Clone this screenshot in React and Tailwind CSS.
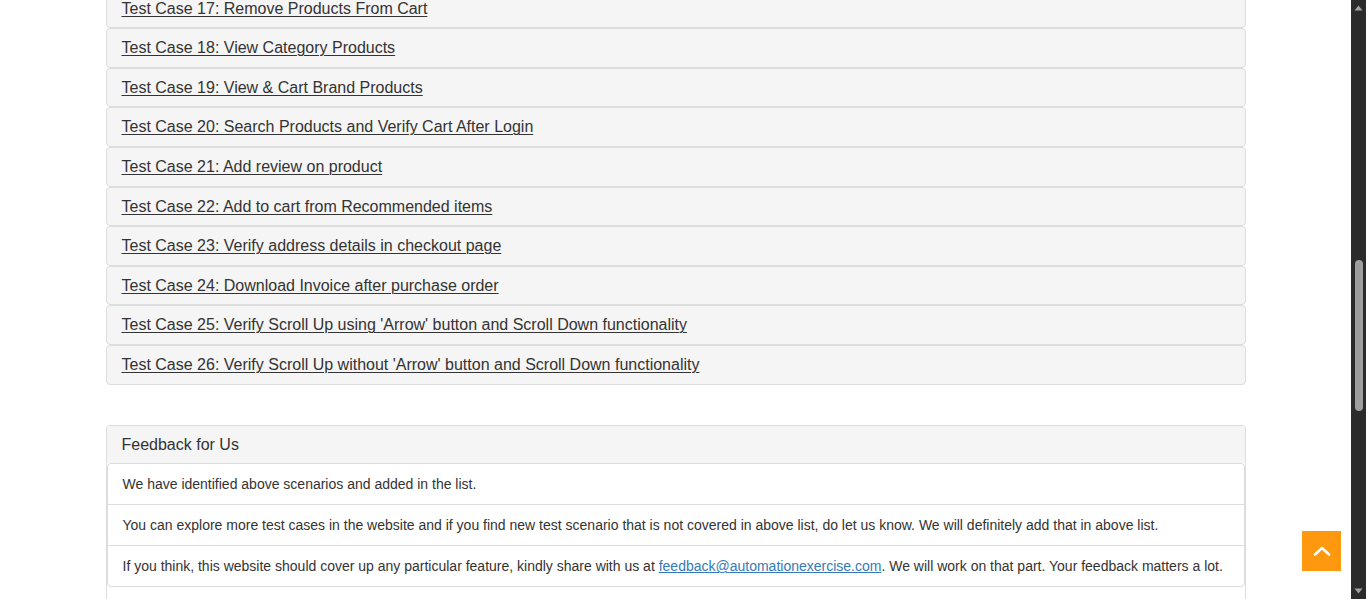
import React from "react";

const cases = [
  "Test Case 17: Remove Products From Cart",
  "Test Case 18: View Category Products",
  "Test Case 19: View & Cart Brand Products",
  "Test Case 20: Search Products and Verify Cart After Login",
  "Test Case 21: Add review on product",
  "Test Case 22: Add to cart from Recommended items",
  "Test Case 23: Verify address details in checkout page",
  "Test Case 24: Download Invoice after purchase order",
  "Test Case 25: Verify Scroll Up using 'Arrow' button and Scroll Down functionality",
  "Test Case 26: Verify Scroll Up without 'Arrow' button and Scroll Down functionality",
];

export default function App() {
  return (
    <div
      className="relative flex h-[599px] w-[1366px] overflow-hidden bg-white text-[#333]"
      style={{ fontFamily: '"Liberation Sans", Arial, Helvetica, sans-serif' }}
    >
      <div className="relative h-full flex-1 overflow-hidden">
        <div className="mx-auto w-[1170px] px-[15px]">
          <div className="-mt-[11.4px]">
            {cases.map((c) => (
              <div
                key={c}
                className="rounded-[4px] border border-[#ddd] bg-[#f5f5f5] px-[15px] py-[10px] text-[16px] leading-[1.1]"
              >
                <a className="text-[#333] underline decoration-1 underline-offset-[2px]" href="#">
                  {c}
                </a>
              </div>
            ))}
          </div>

          <div className="mt-[40px] rounded-t-[4px] border-x border-t border-[#ddd] pb-[200px]">
            <div className="bg-[#f5f5f5] px-[15px] py-[10px] text-[16px] leading-[1.1]">
              Feedback for Us
            </div>
            <ul className="rounded-[4px] border border-[#ddd] bg-white text-[14px] leading-[20px]">
              <li className="px-[15px] py-[10px]">
                We have identified above scenarios and added in the list.
              </li>
              <li className="border-t border-[#ddd] px-[15px] py-[10px]">
                You can explore more test cases in the website and if you find new test scenario that is not covered in above list, do let us know. We will definitely add that in above list.
              </li>
              <li className="border-t border-[#ddd] px-[15px] py-[10px]">
                If you think, this website should cover up any particular feature, kindly share with us at{" "}
                <a href="#" className="text-[#337ab7] underline">
                  feedback@automationexercise.com
                </a>
                . We will work on that part. Your feedback matters a lot.
              </li>
            </ul>
          </div>
        </div>

        <a
          href="#"
          className="absolute bottom-[28px] right-[10px] flex h-[40px] w-[39px] items-center justify-center bg-[#FE980F]"
        >
          <svg width="18" height="10" viewBox="0 0 18 10" fill="none">
            <polyline
              points="2,8.5 9,2 16,8.5"
              stroke="white"
              strokeWidth="2.6"
              strokeLinecap="round"
              strokeLinejoin="round"
            />
          </svg>
        </a>
      </div>

      <div className="flex h-full w-[15px] flex-col items-center bg-[#2b2b2b]">
        <svg width="9" height="6" viewBox="0 0 9 6" className="mt-[5px]">
          <polygon points="4.5,0.5 8.5,5.5 0.5,5.5" fill="#a3a3a3" />
        </svg>
        <div className="mt-[249px] h-[151px] w-[8px] rounded-full bg-[#9f9f9f]" />
        <div className="flex-1" />
        <svg width="9" height="6" viewBox="0 0 9 6" className="mb-[5px]">
          <polygon points="0.5,0.5 8.5,0.5 4.5,5.5" fill="#a3a3a3" />
        </svg>
      </div>
    </div>
  );
}
